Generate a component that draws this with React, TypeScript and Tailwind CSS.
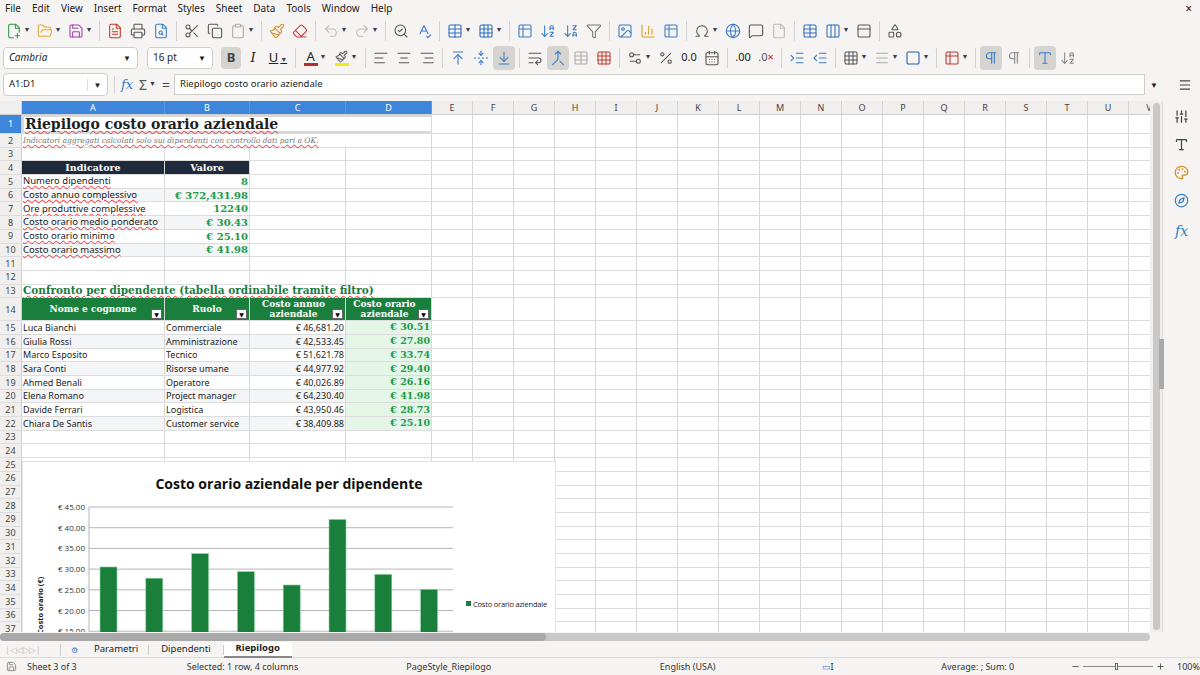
import React from "react";
import {
  FilePlus2, FolderOpen, Save, FileText, Printer, FileSearch, Scissors, Copy, Clipboard, Paintbrush, Eraser,
  Undo2, Redo2, SearchCheck, SpellCheck, Table, Grid3x3, ArrowDownAZ, ArrowDownZA, Filter, Image, BarChart3,
  Table2, Omega, Globe, MessageSquare, File, PanelTop, Shapes, AlignLeft, AlignCenter, AlignRight,
  ArrowUpToLine, FoldVertical, ArrowDownToLine, WrapText, Merge, Percent, CalendarDays, IndentIncrease,
  IndentDecrease, Square, Menu, Sliders, Palette, Compass, Pilcrow, Type, Minus, Plus, Settings2, Columns3
} from "lucide-react";

const UI = { fontFamily: '"Noto Sans", "Open Sans", sans-serif' };
const SERIF = { fontFamily: '"DejaVu Serif", "Liberation Serif", serif' };
const SANS = { fontFamily: '"Open Sans", "Noto Sans", sans-serif' };

function Caret() {
  return <span className="text-[7px] text-gray-700 ml-[2px]">▼</span>;
}
function Ic({ I, c = "#555", dd = false, pressed = false, w = 22 }: any) {
  return (
    <div className={`flex items-center justify-center h-[24px] rounded ${pressed ? "bg-[#d6d4d1]" : ""}`} style={{ minWidth: w }}>
      <I size={16} color={c} strokeWidth={1.6} />
      {dd && <Caret />}
    </div>
  );
}
const Sep = () => <div className="w-px h-[20px] bg-[#d5d3d0] mx-[3px]" />;

const cols = [
  ["A", 143], ["B", 85], ["C", 96], ["D", 86],
  ...["E","F","G","H","I","J","K","L","M","N","O","P","Q","R","S","T","U","V"].map((l) => [l, 41] as [string, number]),
] as [string, number][];

type Cell = { t?: string; cls?: string; span?: number; bg?: string; serif?: boolean };
const green = "text-[#1e9a48]";

function rowsData(): { h: number; cells: Cell[] }[] {
  const r: { h: number; cells: Cell[] }[] = [];
  const sp = "underline decoration-wavy decoration-red-500 decoration-[1px]";
  r.push({ h: 19, cells: [{ t: "Riepilogo costo orario aziendale", span: 4, serif: true, cls: `text-[14px] font-bold text-[#1f1f1f] ${sp}` }] });
  r.push({ h: 13.7, cells: [{ t: "Indicatori aggregati calcolati solo sui dipendenti con controllo dati pari a OK.", span: 4, serif: true, cls: `text-[7.5px] italic text-[#777] ${sp}` }] });
  r.push({ h: 13.7, cells: [] });
  r.push({ h: 13.7, cells: [
    { t: "Indicatore", serif: true, bg: "bg-[#1f2a3c]", cls: "text-white font-bold text-[9.5px] justify-center" },
    { t: "Valore", serif: true, bg: "bg-[#1f2a3c]", cls: "text-white font-bold text-[9.5px] justify-center" },
  ] });
  const kv = [["Numero dipendenti","8"],["Costo annuo complessivo","€ 372,431.98"],["Ore produttive complessive","12240"],["Costo orario medio ponderato","€ 30.43"],["Costo orario minimo","€ 25.10"],["Costo orario massimo","€ 41.98"]];
  kv.forEach(([a,b], i) => r.push({ h: 13.7, cells: [
    { t: a, cls: `text-[9.5px] text-[#222] ${sp}`, bg: i % 2 ? "bg-[#f4f5f6]" : "" },
    { t: b, serif: true, cls: `text-[10px] font-bold justify-end ${green}`, bg: i % 2 ? "bg-[#f4f5f6]" : "" },
  ] }));
  r.push({ h: 13.7, cells: [] });
  r.push({ h: 13.7, cells: [] });
  r.push({ h: 13.7, cells: [{ t: "Confronto per dipendente (tabella ordinabile tramite filtro)", span: 4, serif: true, cls: `text-[10.5px] font-bold text-[#1a7a3c] ${sp}` }] });
  r.push({ h: 23, cells: [
    { t: "Nome e cognome", serif: true, bg: "bg-[#1a7f3c]", cls: "text-white font-bold text-[9px] justify-center filt" },
    { t: "Ruolo", serif: true, bg: "bg-[#1a7f3c]", cls: "text-white font-bold text-[9px] justify-center filt" },
    { t: "Costo annuo|aziendale", serif: true, bg: "bg-[#1a7f3c]", cls: "text-white font-bold text-[9px] justify-center filt" },
    { t: "Costo orario|aziendale", serif: true, bg: "bg-[#1a7f3c]", cls: "text-white font-bold text-[9px] justify-center filt" },
  ] });
  const emp = [["Luca Bianchi","Commerciale","€ 46,681.20","€ 30.51"],["Giulia Rossi","Amministrazione","€ 42,533.45","€ 27.80"],["Marco Esposito","Tecnico","€ 51,621.78","€ 33.74"],["Sara Conti","Risorse umane","€ 44,977.92","€ 29.40"],["Ahmed Benali","Operatore","€ 40,026.89","€ 26.16"],["Elena Romano","Project manager","€ 64,230.40","€ 41.98"],["Davide Ferrari","Logistica","€ 43,950.46","€ 28.73"],["Chiara De Santis","Customer service","€ 38,409.88","€ 25.10"]];
  emp.forEach((e, i) => {
    const bg = i % 2 ? "bg-[#f4f5f6]" : "";
    r.push({ h: 13.7, cells: [
      { t: e[0], cls: "text-[9px] text-[#222]", bg },
      { t: e[1], cls: "text-[9px] text-[#222]", bg },
      { t: e[2], cls: "text-[9px] text-[#222] justify-end", bg },
      { t: e[3], serif: true, cls: `text-[9.5px] font-bold justify-end ${green}`, bg: "bg-[#e3f6e7]" },
    ] });
  });
  for (let i = 23; i <= 37; i++) r.push({ h: 13.7, cells: [] });
  return r;
}

function Grid() {
  const rows = rowsData();
  return (
    <div className="relative h-[531px] overflow-hidden bg-white">
      <div className="flex h-[14px] bg-[#f0efed] border-b border-[#cfcfcf]">
        <div className="w-[22px] shrink-0 border-r border-[#cfcfcf]" />
        {cols.map(([l, w], i) => (
          <div key={l} style={{ width: w }} className={`shrink-0 flex items-center justify-center text-[9px] border-r ${i < 4 ? "bg-[#3d86dc] text-white border-[#5a9ae4]" : "text-[#444] border-[#d4d4d4]"}`}>{l}</div>
        ))}
      </div>
      {rows.map((row, ri) => {
        const out: React.ReactNode[] = [];
        let ci = 0;
        row.cells.forEach((c, k) => {
          const span = c.span || 1;
          let w = 0;
          for (let j = ci; j < ci + span; j++) w += cols[j][1];
          const filt = c.cls?.includes("filt");
          out.push(
            <div key={k} style={{ width: w, ...(c.serif ? SERIF : {}) }} className={`shrink-0 relative flex items-center px-[1px] whitespace-nowrap border-r border-[#d9d9d9] ${c.bg || ""} ${c.cls || ""} ${ri === 0 ? "border-2 border-[#3d86dc]" : ""}`}>
              {c.t?.includes("|") ? (
                <div className="leading-[10px] text-center w-full pr-2">{c.t.split("|").map((s, q) => <div key={q}>{s}</div>)}</div>
              ) : <span>{c.t}</span>}
              {filt && <div className="absolute right-[2px] bottom-[1px] w-[11px] h-[10px] bg-white border border-[#666] flex items-center justify-center text-[6px] text-black">▼</div>}
            </div>
          );
          ci += span;
        });
        for (let j = ci; j < cols.length; j++) out.push(<div key={"e" + j} style={{ width: cols[j][1] }} className="shrink-0 border-r border-[#d9d9d9]" />);
        return (
          <div key={ri} className="flex border-b border-[#dcdcdc] shrink-0" style={{ height: row.h }}>
            <div className={`w-[22px] shrink-0 flex items-center justify-center text-[9px] border-r border-[#cfcfcf] ${ri === 0 ? "bg-[#3d86dc] text-white" : "bg-[#f0efed] text-[#444]"}`}>{ri + 1}</div>
            {out}
          </div>
        );
      })}
      <Chart />
    </div>
  );
}

function Chart() {
  const vals = [30.51, 27.8, 33.74, 29.4, 26.16, 41.98, 28.73, 25.1];
  const y = (v: number) => 45 + (45 - v) * 4.14;
  const ticks = [45, 40, 35, 30, 25, 20, 15];
  return (
    <div className="absolute left-[22px] top-[360px] w-[534px] h-[200px] bg-white border border-[#e4e4e4]">
      <div className="text-center mt-[11px] text-[14px] font-bold text-[#111]" style={SANS}>Costo orario aziendale per dipendente</div>
      <svg className="absolute left-0 top-0" width="534" height="200">
        {ticks.map((t) => (
          <g key={t}>
            <line x1={66} x2={430} y1={y(t)} y2={y(t)} stroke="#b5b5b5" strokeWidth={1} />
            <text x={62} y={y(t) + 3} fontSize="8" textAnchor="end" fill="#333" fontFamily="Open Sans, sans-serif">€ {t}.00</text>
          </g>
        ))}
        <line x1={66} x2={66} y1={y(45)} y2={200} stroke="#b5b5b5" />
        {vals.map((v, i) => (
          <rect key={i} x={77 + i * 45.8} y={y(v)} width={17} height={200 - y(v)} fill="#1b7f3c" stroke="#8ed3a0" strokeWidth={0.6} />
        ))}
        <text transform="translate(20,172) rotate(-90)" fontSize="7.5" fontWeight="bold" fill="#222" fontFamily="Open Sans, sans-serif">Costo orario (€)</text>
        <rect x={443} y={139} width={5} height={5} fill="#1b7f3c" />
        <text x={450} y={145} fontSize="7.5" fill="#222" fontFamily="Open Sans, sans-serif" letterSpacing="-0.2">Costo orario aziendale</text>
      </svg>
    </div>
  );
}

export default function App() {
  return (
    <div className="w-[1200px] h-[675px] overflow-hidden bg-[#f5f4f2] text-[#222] flex flex-col" style={UI}>
      <div className="h-[17px] flex items-center text-[10px] px-[5px] gap-[11px] relative">
        {["File","Edit","View","Insert","Format","Styles","Sheet","Data","Tools","Window","Help"].map((m) => <span key={m}>{m}</span>)}
        <span className="absolute right-[8px] top-0 text-[12px]">×</span>
      </div>
      <div className="h-[27px] flex items-center px-[3px] gap-[1px]">
        <Ic I={FilePlus2} c="#2e9a3e" dd w={30} /><Ic I={FolderOpen} c="#e6a52a" dd w={30} /><Ic I={Save} c="#a040a8" dd w={30} /><Sep />
        <Ic I={FileText} c="#c0392b" /><Ic I={Printer} /><Ic I={FileSearch} c="#3a7bc8" /><Sep />
        <Ic I={Scissors} /><Ic I={Copy} /><Ic I={Clipboard} c="#aaa" dd w={30} /><Sep />
        <Ic I={Paintbrush} c="#d98a2b" /><Ic I={Eraser} c="#d03b3b" /><Sep />
        <Ic I={Undo2} c="#bbb" dd w={30} /><Ic I={Redo2} c="#bbb" dd w={30} /><Sep />
        <Ic I={SearchCheck} /><Ic I={SpellCheck} c="#3a7bc8" /><Sep />
        <Ic I={Table} c="#2f6fc0" dd w={30} /><Ic I={Grid3x3} c="#2f6fc0" dd w={30} /><Sep />
        <Ic I={Table2} c="#3a7bc8" /><Ic I={ArrowDownAZ} c="#3a7bc8" /><Ic I={ArrowDownZA} c="#3a7bc8" /><Ic I={Filter} c="#777" /><Sep />
        <Ic I={Image} c="#3a7bc8" /><Ic I={BarChart3} c="#d4a02b" /><Ic I={Table2} c="#3a7bc8" /><Sep />
        <Ic I={Omega} dd w={30} /><Ic I={Globe} c="#3a7bc8" /><Ic I={MessageSquare} /><Ic I={File} c="#bbb" /><Sep />
        <Ic I={Table} c="#2f6fc0" /><Ic I={Columns3} c="#2f6fc0" dd w={30} /><Ic I={PanelTop} /><Sep />
        <Ic I={Shapes} />
      </div>
      <div className="h-[27px] flex items-center px-[3px] gap-[1px]">
        <div className="w-[135px] h-[22px] bg-white border border-[#cfcdca] rounded flex items-center justify-between pl-[5px] text-[10px] italic">
          <span>Cambria</span><span className="w-[20px] text-center text-[8px] not-italic">▼</span>
        </div>
        <div className="w-[66px] h-[22px] ml-[8px] bg-white border border-[#cfcdca] rounded flex items-center justify-between pl-[5px] text-[10px]">
          <span>16 pt</span><span className="w-[20px] text-center text-[8px]">▼</span>
        </div>
        <div className="w-[20px] h-[22px] ml-[7px] rounded bg-[#d6d4d1] flex items-center justify-center text-[13px] font-bold text-[#444]">B</div>
        <div className="w-[22px] text-center text-[13px] italic" style={SERIF}>I</div>
        <div className="w-[26px] text-center text-[13px] underline">U<Caret /></div><Sep />
        <div className="w-[30px] flex items-center justify-center"><div className="flex flex-col items-center"><span className="text-[13px] leading-[13px]">A</span><div className="w-[14px] h-[3px] bg-[#c0262d]" /></div><Caret /></div>
        <div className="w-[30px] flex items-center justify-center"><div className="flex flex-col items-center"><Paintbrush size={13} color="#666" /><div className="w-[14px] h-[3px] bg-[#f4e81a]" /></div><Caret /></div><Sep />
        <Ic I={AlignLeft} /><Ic I={AlignCenter} /><Ic I={AlignRight} /><Sep />
        <Ic I={ArrowUpToLine} c="#3a7bc8" /><Ic I={FoldVertical} c="#3a7bc8" /><Ic I={ArrowDownToLine} c="#3a7bc8" pressed /><Sep />
        <Ic I={WrapText} /><Ic I={Merge} c="#3a7bc8" pressed /><Ic I={Table} c="#aaa" /><Ic I={Grid3x3} c="#c0392b" /><Sep />
        <Ic I={Settings2} dd w={30} /><Ic I={Percent} /><span className="text-[11px] w-[22px] text-center">0.0</span><Ic I={CalendarDays} /><Sep />
        <span className="text-[11px] w-[22px] text-center">.00</span><span className="text-[11px] w-[22px] text-center text-[#555]">.0<span className="text-red-600">×</span></span><Sep />
        <Ic I={IndentIncrease} c="#3a7bc8" /><Ic I={IndentDecrease} c="#3a7bc8" /><Sep />
        <Ic I={Grid3x3} dd w={30} /><Ic I={Menu} c="#aaa" dd w={30} /><Ic I={Square} c="#1f5fa8" dd w={30} /><Sep />
        <Ic I={Table2} c="#c0392b" dd w={30} /><Sep />
        <Ic I={Pilcrow} c="#3a7bc8" pressed /><Ic I={Pilcrow} c="#888" /><Sep />
        <Ic I={Type} c="#3a7bc8" pressed /><Ic I={ArrowDownAZ} c="#888" />
      </div>
      <div className="h-[27px] flex items-center px-[3px]">
        <div className="w-[105px] h-[23px] bg-white border border-[#cfcdca] rounded flex items-center justify-between pl-[5px] text-[9.5px]">
          <span>A1:D1</span><span className="w-[20px] border-l border-[#ddd] text-center text-[8px]">▼</span>
        </div>
        <div className="w-px h-[18px] bg-[#d5d3d0] mx-[6px]" />
        <span className="text-[13px] italic text-[#3a7bc8] w-[18px]" style={SERIF}>fx</span>
        <span className="text-[14px] text-[#555]">Σ</span><Caret />
        <span className="text-[14px] text-[#444] ml-[6px] mr-[4px]">=</span>
        <div className="w-[971px] h-[21px] bg-white border border-[#cfcdca] flex items-center pl-[5px] text-[9.5px]">Riepilogo costo orario aziendale</div>
        <span className="text-[8px] ml-[5px]">▼</span>
        <Menu size={14} color="#444" className="ml-[20px]" />
      </div>
      <div className="h-[3px]" />
      <div className="flex h-[531px]">
        <div className="w-[1150px] shrink-0"><Grid /></div>
        <div className="w-[12px] bg-[#f0efed] flex justify-center pt-[2px]"><div className="w-[7px] h-[527px] bg-[#c8c8c8] rounded-sm" /></div>
        <div className="flex-1 border-l border-[#dcdbd9] flex flex-col items-center pt-[8px] gap-[13px] relative">
          <Sliders size={15} color="#444" /><Type size={15} color="#444" /><Palette size={15} color="#d88a1a" /><Compass size={15} color="#3a7bc8" />
          <span className="text-[14px] italic text-[#3a7bc8]" style={SERIF}>fx</span>
          <div className="absolute left-[-4px] top-[238px] w-[5px] h-[50px] bg-[#aaa]" />
        </div>
      </div>
      <div className="h-[10px] flex items-center">
        <div className="w-[1150px] h-[8px] bg-[#c8c8c8] rounded-sm relative"><div className="absolute left-0 top-0 h-[8px] w-[546px] bg-[#a8a8a8] rounded-sm" /></div>
      </div>
      <div className="h-[16px] flex items-center text-[9.5px] border-b border-[#dcdbd9]">
        <span className="text-[#c5c5c5] text-[9px] w-[56px] pl-[5px] tracking-tighter whitespace-nowrap overflow-hidden">|◁◁▷▷|</span>
        <div className="w-px h-[12px] bg-[#ccc] mx-[4px]" />
        <span className="text-[#3a7bc8] text-[8px] mx-[6px]">⚙</span>
        <span className="px-[10px]">Parametri</span><div className="w-px h-[10px] bg-[#ccc]" />
        <span className="px-[12px]">Dipendenti</span><div className="w-px h-[10px] bg-[#ccc]" />
        <span className="px-[12px] font-bold bg-white border-b-2 border-[#888] h-[16px] flex items-center">Riepilogo</span>
      </div>
      <div className="h-[17px] flex items-center text-[9px] text-[#333]">
        <Save size={11} color="#888" className="ml-[6px]" />
        <span className="ml-[10px] w-[160px]">Sheet 3 of 3</span>
        <span className="w-[220px]">Selected: 1 row, 4 columns</span>
        <span className="w-[254px]">PageStyle_Riepilogo</span>
        <span className="w-[162px]">English (USA)</span>
        <span className="w-[120px] text-[#3a7bc8]">▭<span className="text-[#333]">I</span></span>
        <span className="w-[130px]">Average: ; Sum: 0</span>
        <span className="ml-[0px] flex items-center gap-[3px]"><Minus size={9} /><span className="w-[70px] h-px bg-[#888] relative"><span className="absolute left-[32px] top-[-3px] w-[3px] h-[7px] bg-white border border-[#666]" /></span><Plus size={9} /></span>
        <span className="ml-[12px]">100%</span>
      </div>
    </div>
  );
}
